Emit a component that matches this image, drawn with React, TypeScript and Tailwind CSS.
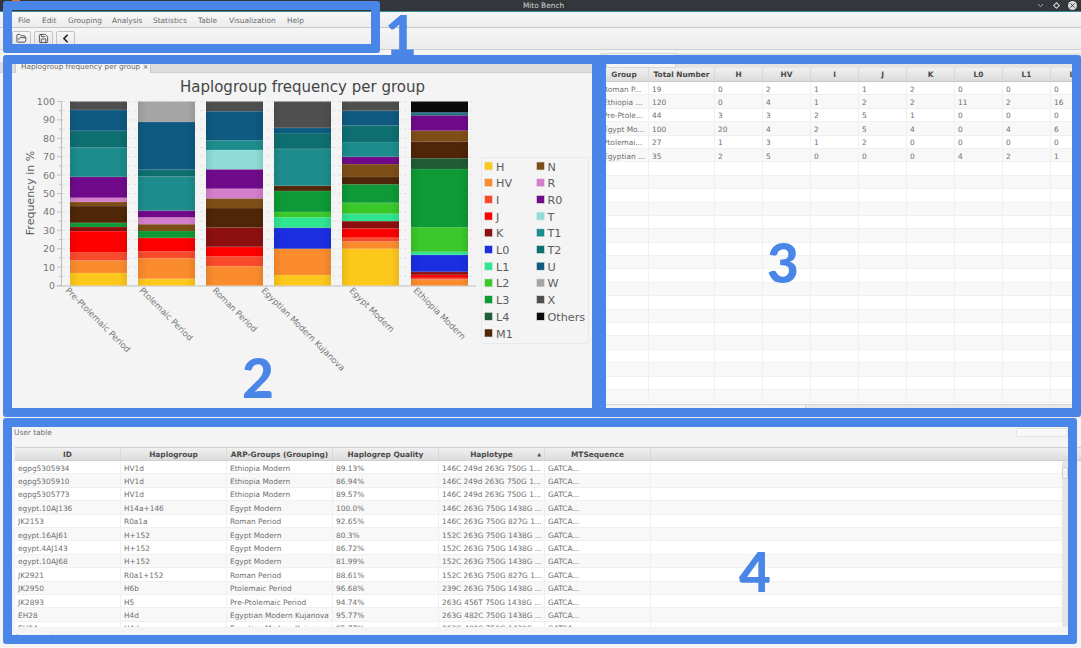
import React from "react";
import { FolderOpen, Save, ChevronLeft, ChevronDown, X } from "lucide-react";

const COLORS: Record<string, string> = {
  H: "#fdc81c", HV: "#fb8c2e", I: "#f94a2c", J: "#fe0000", K: "#8c1010", L0: "#1b2ee0", L1: "#30e590",
  L2: "#3bc82a", L3: "#0e9a36", L4: "#1f5c36", M1: "#4f2608", N: "#7e4e18", R: "#d57fcc", R0: "#700a8a",
  T: "#8fdcd8", T1: "#1d8c8c", T2: "#0e6e70", U: "#0e5a80", W: "#a5a5a5", X: "#4f4f4f", Others: "#0a0a0a",
};

const BARS: { name: string; x: number; lx: number; ly: number; data: [string, number][] }[] = [
  { name: "Pre-Ptolemaic Period", x: 70, lx: 65, ly: 291, data: [["H", 3], ["HV", 3], ["I", 2], ["J", 5], ["K", 1], ["L3", 1], ["M1", 4], ["N", 1], ["R", 1], ["R0", 5], ["T1", 7], ["T2", 4], ["U", 5], ["X", 2]] },
  { name: "Ptolemaic Period", x: 138, lx: 139, ly: 291, data: [["H", 1], ["HV", 3], ["I", 1], ["J", 2], ["L3", 1], ["N", 1], ["R", 1], ["R0", 1], ["T1", 5], ["T2", 1], ["U", 7], ["W", 3]] },
  { name: "Roman Period", x: 206, lx: 212, ly: 291, data: [["HV", 2], ["I", 1], ["J", 1], ["K", 2], ["M1", 2], ["N", 1], ["R", 1], ["R0", 2], ["T", 2], ["T1", 1], ["U", 3], ["X", 1]] },
  { name: "Egyptian Modern Kujanova", x: 274, lx: 261, ly: 291, data: [["H", 2], ["HV", 5], ["L0", 4], ["L1", 2], ["L2", 1], ["L3", 4], ["M1", 1], ["T1", 7], ["T2", 3], ["U", 1], ["X", 5]] },
  { name: "Egypt Modern", x: 342, lx: 349, ly: 291, data: [["H", 20], ["HV", 4], ["I", 2], ["J", 5], ["K", 4], ["L1", 4], ["L2", 6], ["L3", 10], ["M1", 4], ["N", 7], ["R0", 4], ["T1", 8], ["T2", 9], ["U", 8], ["X", 5]] },
  { name: "Ethiopia Modern", x: 411, lx: 413, ly: 291, data: [["HV", 4], ["I", 1], ["J", 2], ["K", 2], ["L0", 11], ["L1", 2], ["L2", 16], ["L3", 38], ["L4", 7], ["M1", 11], ["N", 7], ["R0", 10], ["T2", 1], ["U", 1], ["Others", 7]] },
];

const LEGEND_A = ["H", "HV", "I", "J", "K", "L0", "L1", "L2", "L3", "L4", "M1"];
const LEGEND_B = ["N", "R", "R0", "T", "T1", "T2", "U", "W", "X", "Others"];

const Y0 = 285.5;
const PX = 1.84;

function Chart() {
  const ticks = Array.from({ length: 21 }, (_, i) => i * 5);
  return (
    <svg viewBox="0 73 600 345" className="block w-[600px] h-[345px]" style={{ fontFamily: '"DejaVu Sans", sans-serif' }}>
      <defs>
        <linearGradient id="sheen" x1="0" x2="1" y1="0" y2="0">
          <stop offset="0" stopColor="#000" stopOpacity="0.08" />
          <stop offset="0.15" stopColor="#000" stopOpacity="0" />
          <stop offset="0.85" stopColor="#000" stopOpacity="0" />
          <stop offset="1" stopColor="#000" stopOpacity="0.08" />
        </linearGradient>
      </defs>
      <text x="302.5" y="92" textAnchor="middle" fontSize="15" fill="#444">Haplogroup frequency per group</text>
      {ticks.map((t) => {
        const y = Y0 - t * PX;
        const major = t % 10 === 0;
        return (
          <g key={t}>
            {t > 0 && <line x1="62" x2="476" y1={y} y2={y} stroke="#dedede" strokeWidth="0.8" strokeDasharray="3 3" />}
            <line x1={major ? 57 : 59} x2="62" y1={y} y2={y} stroke="#b5b5b5" strokeWidth="0.8" />
            {major && <text x="55" y={y + 3.4} textAnchor="end" fontSize="9.5" fill="#777">{t}</text>}
          </g>
        );
      })}
      <line x1="61.5" x2="61.5" y1="101" y2="286" stroke="#bdbdbd" />
      <line x1="57" x2="476" y1="286" y2="286" stroke="#bdbdbd" />
      <text transform="translate(34 193) rotate(-90)" textAnchor="middle" fontSize="11" fill="#5c5c5c">Frequency in %</text>
      {BARS.map((b) => {
        const total = b.data.reduce((s, d) => s + d[1], 0);
        let acc = 0;
        return (
          <g key={b.name}>
            {b.data.map(([k, v]) => {
              const h = (v / total) * 100 * PX;
              const y = Y0 - acc - h;
              acc += h;
              return (
                <g key={k}>
                  <rect x={b.x} y={y} width="57" height={h} fill={COLORS[k]} />
                  <line x1={b.x} x2={b.x + 57} y1={y + 0.3} y2={y + 0.3} stroke="#fff" strokeOpacity="0.14" strokeWidth="0.7" />
                </g>
              );
            })}
            <rect x={b.x} y={Y0 - 184} width="57" height="184" fill="url(#sheen)" />
            <text transform={`translate(${b.lx} ${b.ly}) rotate(45)`} fontSize="8.5" fill="#777">{b.name}</text>
          </g>
        );
      })}
      <rect x="481.5" y="157.5" width="107" height="186" rx="2" fill="#f4f4f4" stroke="#e8e8e8" />
      {LEGEND_A.map((k, i) => (
        <g key={k}>
          <rect x="484.5" y={162 + i * 16.7} width="8" height="8" fill={COLORS[k]} stroke="#e6e6e6" strokeWidth="0.6" />
          <text x="496" y={170.5 + i * 16.7} fontSize="11.2" fill="#5c5c5c">{k}</text>
        </g>
      ))}
      {LEGEND_B.map((k, i) => (
        <g key={k}>
          <rect x="536.5" y={162 + i * 16.7} width="8" height="8" fill={COLORS[k]} stroke="#e6e6e6" strokeWidth="0.6" />
          <text x="547.5" y={170.5 + i * 16.7} fontSize="11.2" fill="#5c5c5c">{k}</text>
        </g>
      ))}
    </svg>
  );
}

const MENU = [
  ["File", "w-[24px]"],
  ["Edit", "w-[26px]"],
  ["Grouping", "w-[44px]"],
  ["Analysis", "w-[41px]"],
  ["Statistics", "w-[45px]"],
  ["Table", "w-[31px]"],
  ["Visualization", "w-[58px]"],
  ["Help", "w-[24px]"],
];

const STAT_COLS = ["H", "HV", "I", "J", "K", "L0", "L1", "L2"];
const STATS: string[][] = [
  ["Roman P...", "19", "0", "2", "1", "1", "2", "0", "0", "0"],
  ["Ethiopia ...", "120", "0", "4", "1", "2", "2", "11", "2", "16"],
  ["Pre-Ptole...", "44", "3", "3", "2", "5", "1", "0", "0", "0"],
  ["Egypt Mo...", "100", "20", "4", "2", "5", "4", "0", "4", "6"],
  ["Ptolemai...", "27", "1", "3", "1", "2", "0", "0", "0", "0"],
  ["Egyptian ...", "35", "2", "5", "0", "0", "0", "4", "2", "1"],
];
const STAT_WIDTHS = ["w-[49px]", "w-[66px]", "w-[48px]", "w-[48px]", "w-[48px]", "w-[48px]", "w-[48px]", "w-[48px]", "w-[48px]", "w-[48px]"];

const USERS: string[][] = [
  ["egpg5305934", "HV1d", "Ethiopia Modern", "89.13%", "146C 249d 263G 750G 1...", "GATCA..."],
  ["egpg5305910", "HV1d", "Ethiopia Modern", "86.94%", "146C 249d 263G 750G 1...", "GATCA..."],
  ["egpg5305773", "HV1d", "Ethiopia Modern", "89.57%", "146C 249d 263G 750G 1...", "GATCA..."],
  ["egypt.10AJ136", "H14a+146", "Egypt Modern", "100.0%", "146C 263G 750G 1438G ...", "GATCA..."],
  ["JK2153", "R0a1a", "Roman Period", "92.65%", "146C 263G 750G 827G 1...", "GATCA..."],
  ["egypt.16AJ61", "H+152", "Egypt Modern", "80.3%", "152C 263G 750G 1438G ...", "GATCA..."],
  ["egypt.4AJ143", "H+152", "Egypt Modern", "86.72%", "152C 263G 750G 1438G ...", "GATCA..."],
  ["egypt.10AJ68", "H+152", "Egypt Modern", "81.99%", "152C 263G 750G 1438G ...", "GATCA..."],
  ["JK2921", "R0a1+152", "Roman Period", "88.61%", "152C 263G 750G 827G 1...", "GATCA..."],
  ["JK2950", "H6b", "Ptolemaic Period", "96.68%", "239C 263G 750G 1438G ...", "GATCA..."],
  ["JK2893", "H5", "Pre-Ptolemaic Period", "94.74%", "263G 456T 750G 1438G ...", "GATCA..."],
  ["EH28", "H4d", "Egyptian Modern Kujanova", "95.77%", "263G 482C 750G 1438G ...", "GATCA..."],
  ["EH24", "H4d", "Egyptian Modern Kujanova", "95.77%", "263G 482C 750G 1438G ...", "GATCA..."],
];
const USER_COLS = ["ID", "Haplogroup", "ARP-Groups (Grouping)", "Haplogrep Quality", "Haplotype", "MTSequence"];

const cellBase = "h-full shrink-0 flex items-center border-r border-[#f0f0f0] pl-[3px] pt-[2px] whitespace-nowrap overflow-hidden";
const headBase = "h-full shrink-0 flex items-center justify-center border-r border-[#d8d8d8] pt-[1px] font-bold text-[#4a4a4a] whitespace-nowrap";

function Box({ className }: { className: string }) {
  return <div className={`absolute border-[9px] border-[#4a86e8] rounded-[3px] pointer-events-none ${className}`} />;
}

function Numeral({ className, children }: { className: string; children: React.ReactNode }) {
  return (
    <div className={`absolute font-black text-[55px] leading-none text-[#4a86e8] ${className}`} style={{ fontFamily: 'Lato, "Liberation Sans", sans-serif' }}>
      {children}
    </div>
  );
}

export default function App() {
  return (
    <div
      className="relative w-[1081px] h-[648px] overflow-hidden bg-white flex flex-col text-[7.4px] text-[#6e6e6e]"
      style={{ fontFamily: '"DejaVu Sans", sans-serif' }}
    >
      {/* window title */}
      <div className="h-[12px] shrink-0 bg-[#33363b] border-b border-[#3d8a92] flex items-center justify-center pl-[6px] text-[#d5d5d5] relative">
        Mito Bench
        <div className="absolute right-[4px] top-0 h-[11px] flex items-center gap-[9px]">
          <ChevronDown size={9} className="text-[#cfcfcf]" />
          <div className="w-[5px] h-[5px] rotate-45 border border-[#dcdcdc]" />
          <div className="w-[9px] h-[9px] rounded-full bg-[#d8d8d8] flex items-center justify-center">
            <X size={7} className="text-[#33363b]" strokeWidth={3} />
          </div>
        </div>
      </div>

      {/* menu */}
      <div className="h-[16px] shrink-0 bg-gradient-to-b from-[#f8f8f8] to-[#ececec] border-b border-[#c6c6c6] flex items-center pl-[18px] pt-[2px] text-[#6a6a6a]">
        {MENU.map(([m, w]) => (
          <div key={m} className={w}>{m}</div>
        ))}
      </div>

      {/* toolbar */}
      <div className="h-[22px] shrink-0 bg-gradient-to-b from-[#f6f6f6] to-[#ececec] border-b border-[#cfcfcf] flex items-start gap-[3px] pl-[12px] pt-[3px]">
        {[FolderOpen, Save, ChevronLeft].map((Icon, i) => (
          <div key={i} className="w-[19px] h-[17px] rounded-[2px] border border-[#c4c4c4] bg-gradient-to-b from-[#f7f7f7] to-[#e4e4e4] flex items-center justify-center pb-[2px]">
            <Icon size={i === 2 ? 13 : 11} strokeWidth={i === 2 ? 3.2 : 1.6} className="text-[#222]" />
          </div>
        ))}
      </div>

      {/* upper panes */}
      <div className="h-[368px] shrink-0 flex">
        <div className="w-[600px] shrink-0 flex flex-col bg-[#f4f4f4] pt-[12px]">
          <div className="h-[11px] shrink-0 bg-[#dcdcdc] border-b border-[#cfcfcf] pl-[15px]">
            <div className="w-[136px] h-[11px] bg-[#f4f4f4] border-x border-[#c8c8c8] flex items-center pl-[5px] text-[7.3px] text-[#6a6a6a] whitespace-nowrap">
              Haplogroup frequency per group ×
            </div>
          </div>
          <Chart />
        </div>
        <div className="flex-1 min-w-0 flex flex-col bg-[#f4f4f4] pt-[3px]">
          <div className="h-[15px] shrink-0 pl-[6px] flex bg-[#e4e4e4]">
            <div className="w-[70px] h-[15px] bg-[#f4f4f4] border border-[#d5d5d5] flex items-end justify-center pb-[2px] text-[#6a6a6a] whitespace-nowrap">Count statistics</div>
          </div>
          <div className="h-[14px] shrink-0 flex bg-gradient-to-b from-[#f0f0f0] to-[#dcdcdc] border-b border-[#c8c8c8]">
            {["Group", "Total Number", ...STAT_COLS].map((c, i) => (
              <div key={c} className={`${headBase} ${STAT_WIDTHS[i]}`}>{c}</div>
            ))}
          </div>
          <div className="flex-1 min-h-0 overflow-hidden bg-white">
            {Array.from({ length: 24 }, (_, r) => (
              <div key={r} className={`h-[13.4px] flex border-b border-[#f0f0f0] ${r % 2 ? "bg-[#f8f8f8]" : "bg-white"}`}>
                {STAT_WIDTHS.map((w, c) => (
                  <div key={c} className={`${cellBase} ${w}`}>{STATS[r]?.[c] ?? ""}</div>
                ))}
              </div>
            ))}
          </div>
          <div className="h-[14px] shrink-0 bg-[#e8e8e8] border-t border-[#d4d4d4]">
            <div className="w-[206px] h-[3px] bg-[#f4f4f4] border-r border-[#cfcfcf]" />
          </div>
        </div>
      </div>

      {/* user table */}
      <div className="flex-1 min-h-0 bg-[#f4f4f4] flex flex-col pl-[12px] pt-[10px]">
        <div className="h-[19px] shrink-0 flex items-start justify-between pl-[2px] pr-[13px]">
          <span className="leading-[10px]">User table</span>
          <div className="w-[52px] h-[9px] bg-[#f8f8f8] border border-[#e4e4e4] rounded-[2px]" />
        </div>
        <div className="h-[14px] shrink-0 flex ml-[3px] bg-gradient-to-b from-[#f0f0f0] to-[#dcdcdc] border-y border-[#d0d0d0]">
          {USER_COLS.map((c) => (
            <div key={c} className={`${headBase} w-[106px] relative`}>
              {c}
              {c === "Haplotype" && <span className="absolute right-[3px] text-[5px] text-[#555]">▲</span>}
            </div>
          ))}
        </div>
        <div className="h-[166px] shrink-0 flex overflow-hidden ml-[3px] mr-[13px]">
          <div className="flex-1 min-w-0 overflow-hidden bg-white">
            {USERS.map((u, r) => (
              <div key={r} className={`h-[13.4px] flex border-b border-[#f0f0f0] ${r % 2 ? "bg-[#f8f8f8]" : "bg-white"}`}>
                {u.map((v, c) => (
                  <div key={c} className={`${cellBase} w-[106px]`}>{v}</div>
                ))}
              </div>
            ))}
          </div>
          <div className="w-[6px] shrink-0 bg-[#e6e6e6] flex flex-col items-center">
            <div className="mt-[6px] w-[6px] h-[12px] bg-[#f2f2f2] border border-[#cfcfcf] rounded-[2px]" />
          </div>
        </div>
        <div className="pl-[3px] pt-[5px] text-[#777] whitespace-nowrap">0 rows selected</div>
      </div>

      {/* annotations */}
      <div className="absolute left-[12px] top-0 w-[8px] h-[1px] bg-[#e8742c]" />
      <Box className="left-[3px] top-[1px] w-[377px] h-[52px]" />
      <Box className="left-[3px] top-[55px] w-[598px] h-[362px]" />
      <Box className="left-[597px] top-[55px] w-[484px] h-[362px]" />
      <Box className="left-[3px] top-[418px] w-[1074px] h-[226px]" />
      <Numeral className="left-[385px] top-[7px]">1</Numeral>
      <Numeral className="left-[242px] top-[350px]">2</Numeral>
      <Numeral className="left-[767px] top-[235px]">3</Numeral>
      <Numeral className="left-[739px] top-[544px]">4</Numeral>
    </div>
  );
}
